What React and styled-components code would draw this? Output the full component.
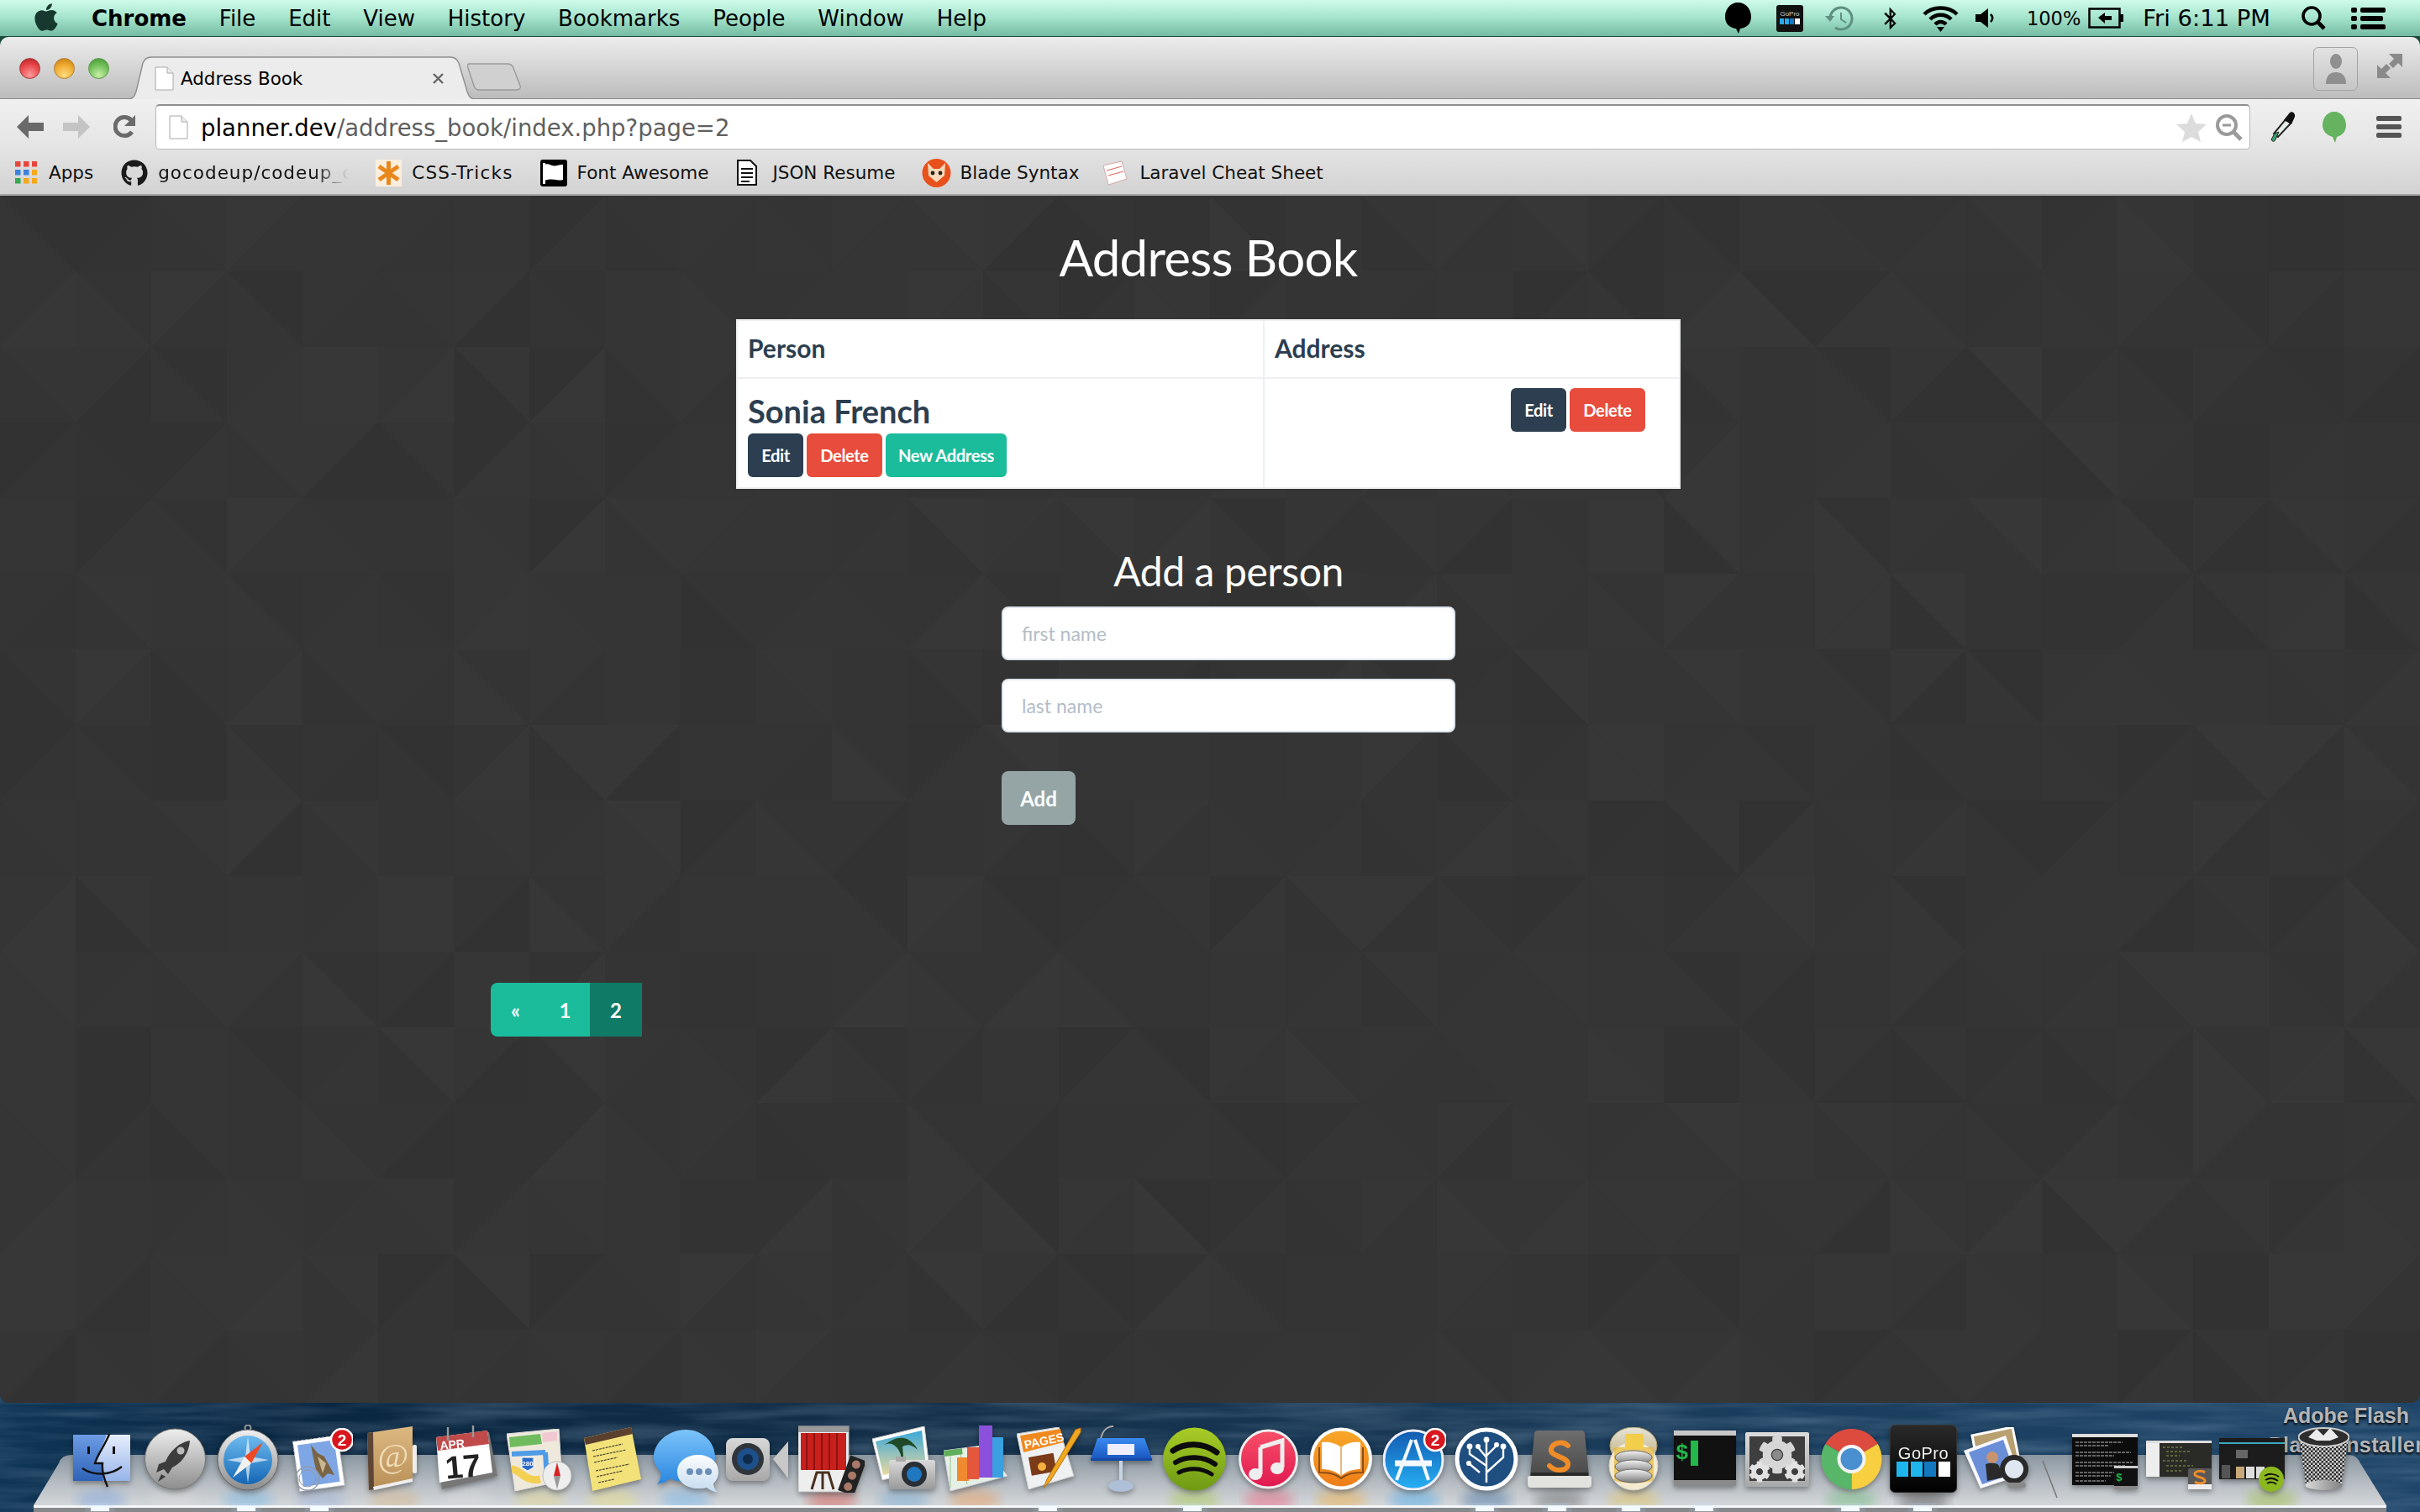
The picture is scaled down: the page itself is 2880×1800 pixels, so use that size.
import React, { useMemo } from 'react';
import styled, { createGlobalStyle } from 'styled-components';
import { FaApple, FaGithub, FaCog, FaBluetoothB } from 'react-icons/fa';

const GlobalStyle = createGlobalStyle`
  html, body { margin: 0; padding: 0; background: #123; }
  body { width: 2880px; height: 1800px; overflow: hidden; font-family: "Lato", sans-serif; }
  * { box-sizing: border-box; }
`;

const Desktop = styled.div`
  width: 2880px;
  height: 1800px;
  display: flex;
  flex-direction: column;
  background: #1c4a3c;
  overflow: hidden;
`;

/* ---------- menu bar ---------- */
const MenuBar = styled.div`
  height: 44px;
  flex: none;
  display: flex;
  align-items: center;
  padding: 0 41px 0 38px;
  background: linear-gradient(180deg, #cffbea 0%, #a8e6cf 45%, #74bba2 100%);
  border-bottom: 1px solid #1f4a3c;
  font-family: "DejaVu Sans", sans-serif;
  font-size: 26px;
  color: #000;
`;

const AppleMark = styled(FaApple)`
  width: 34px;
  height: 37px;
  margin: -3px 37px 0 0;
  color: #17382f;
`;

const MenuList = styled.div`
  display: flex;
  gap: 38.8px;
`;

const MenuItem = styled.span`
  font-weight: ${p => (p.$bold ? 700 : 400)};
  line-height: 40px;
`;

const StatusArea = styled.div`
  margin-left: auto;
  display: flex;
  align-items: center;
`;

const StatusItem = styled.span`
  margin-left: ${p => p.$gap}px;
  display: flex;
  line-height: 40px;
  font-size: ${p => p.$size || 26}px;
  color: ${p => p.$color || '#000'};
`;

/* ---------- browser window ---------- */
const Window = styled.div`
  height: 1626px;
  flex: none;
  display: flex;
  flex-direction: column;
  position: relative;
  z-index: 2;
  border-radius: 10px;
  overflow: hidden;
`;

const TabStrip = styled.div`
  height: 74px;
  flex: none;
  display: flex;
  align-items: flex-end;
  padding-right: 21px;
  background: linear-gradient(180deg, #ececec 0%, #dcdcdc 35%, #bcbcbc 100%);
  border-bottom: 1px solid #8c8c8c;
`;

const Lights = styled.div`
  display: flex;
  gap: 16px;
  margin: 0 22px 23px 23px;
`;

const Light = styled.span`
  width: 25px;
  height: 25px;
  border-radius: 50%;
  border: 1px solid ${p => p.$edge};
  background: radial-gradient(circle at 50% 85%, ${p => p.$glow} 0%, ${p => p.$color} 55%, ${p => p.$dark} 100%);
`;

const Tab = styled.div`
  position: relative;
  width: 414px;
  height: 51px;
  margin-bottom: -1px;
  display: flex;
  align-items: center;
  padding: 1px 0 0 32px;
  font-family: "DejaVu Sans", sans-serif;
  font-size: 21.4px;
  color: #000;
`;

const TabShape = styled.svg`
  position: absolute;
  inset: 0;
  width: 100%;
  height: 100%;
`;

const TabContent = styled.span`
  position: relative;
  display: flex;
  align-items: center;
`;

const TabTitle = styled.span`
  margin-left: 8px;
`;

const TabClose = styled.svg`
  position: absolute;
  left: 363px;
  top: 20px;
  width: 13px;
  height: 13px;
`;

const NewTab = styled.svg`
  width: 64px;
  height: 33px;
  margin: 0 0 9px -10px;
  position: relative;
`;

const ProfileButton = styled.div`
  width: 53px;
  height: 52px;
  margin: 0 23px 9px auto;
  border: 1px solid #a4a4a4;
  border-radius: 6px;
  background: linear-gradient(180deg, #e2e2e2, #c6c6c6);
  display: flex;
  align-items: center;
  justify-content: center;
`;

const FullscreenIcon = styled.svg`
  width: 30px;
  height: 29px;
  margin-bottom: 24px;
`;

const Toolbar = styled.div`
  flex: none;
  height: 115px;
  background: linear-gradient(180deg, #f0f0f0 0%, #e6e6e6 45%, #d2d2d2 100%);
  border-bottom: 2px solid #a6a6a6;
`;

const NavRow = styled.div`
  height: 62px;
  display: flex;
  align-items: center;
  padding: 4px 22px 0 20px;
`;

const NavIcon = styled.svg`
  flex: none;
  margin-left: ${p => p.$gap || 0}px;
  width: ${p => p.$w}px;
  height: ${p => p.$h}px;
`;

const Omnibox = styled.div`
  flex: 1;
  height: 54px;
  margin: 0 0 0 24px;
  display: flex;
  align-items: center;
  padding: 0 8px 0 15px;
  background: #fff;
  border: 1px solid #b8b8b8;
  border-top: 2px solid #8e8e8e;
  border-radius: 5px;
  font-family: "DejaVu Sans", sans-serif;
  font-size: 27.5px;
`;

const UrlHost = styled.span`
  margin-left: 15px;
  color: #000;
`;

const UrlPath = styled.span`
  color: #5f5f5f;
`;

const OmniActions = styled.div`
  margin-left: auto;
  display: flex;
  align-items: center;
  gap: 11px;
`;

const BookmarkBar = styled.div`
  height: 51px;
  display: flex;
  align-items: center;
  padding-left: 18px;
  font-family: "DejaVu Sans", sans-serif;
  font-size: 21.5px;
  color: #111;
`;

const Bookmark = styled.div`
  display: flex;
  align-items: center;
  gap: ${p => p.$inner || 12}px;
  margin-left: ${p => p.$gap || 0}px;
`;

const BookmarkLabel = styled.span`
  white-space: nowrap;
  letter-spacing: ${p => p.$track || 0}px;
`;

const FadedLabel = styled(BookmarkLabel)`
  width: 227px;
  mask-image: linear-gradient(90deg, #000 82%, transparent 100%);
`;

/* ---------- page ---------- */
const Page = styled.main`
  flex: 1;
  position: relative;
  background: #343434;
  overflow: hidden;
`;

const PatternLayer = styled.svg`
  position: absolute;
  inset: 0;
  width: 100%;
  height: 100%;
`;

const Content = styled.div`
  position: relative;
  display: flex;
  flex-direction: column;
  align-items: flex-start;
  padding-top: 30px;
`;

const Title = styled.h1`
  width: 100%;
  margin: 0 0 31px;
  padding-right: 4px;
  text-align: center;
  font-size: 60px;
  line-height: 86px;
  font-weight: 400;
  letter-spacing: -0.7px;
  color: #fff;
`;

const Table = styled.table`
  width: 1124px;
  margin-left: 876px;
  border-collapse: collapse;
  table-layout: fixed;
  background: #fff;
  color: #2c3e50;
`;

const HeadCell = styled.th`
  height: 69px;
  padding: 0 12px 3px;
  border: 2px solid #ecf0f1;
  text-align: left;
  font-size: 30px;
  font-weight: 700;
`;

const BodyCell = styled.td`
  height: 131px;
  padding: 11px 12px 10px;
  border: 2px solid #ecf0f1;
  vertical-align: top;
`;

const PersonName = styled.h3`
  margin: 0;
  font-size: 38px;
  line-height: 54px;
  font-weight: 700;
`;

const ButtonRow = styled.div`
  display: flex;
  gap: 4px;
  justify-content: ${p => (p.$end ? 'flex-end' : 'flex-start')};
  padding-right: ${p => (p.$end ? 28 : 0)}px;
`;

const Button = styled.button`
  width: ${p => p.$w}px;
  height: 52px;
  padding: 0;
  border: none;
  border-radius: 6px;
  background: ${p => p.$color};
  color: #fff;
  font-family: "Lato", sans-serif;
  font-size: 20.2px;
  font-weight: 700;
  letter-spacing: -0.4px;
`;

const Form = styled.form`
  width: 540px;
  margin: 63px 0 0 1192px;
  display: flex;
  flex-direction: column;
`;

const FormTitle = styled.h2`
  margin: 0 0 7px;
  text-align: center;
  font-size: 48px;
  line-height: 70px;
  font-weight: 400;
  letter-spacing: -0.4px;
  color: #fff;
`;

const Input = styled.input`
  width: 540px;
  height: 64px;
  margin-bottom: 22px;
  padding: 0 22px;
  border: 2px solid #dde5ed;
  border-radius: 8px;
  background: #fff;
  font-family: "Lato", sans-serif;
  font-size: 23px;
  &::placeholder { color: #b3bdc7; opacity: 1; }
`;

const AddButton = styled.button`
  width: 88px;
  height: 64px;
  margin-top: 24px;
  border: none;
  border-radius: 8px;
  background: #95a5a6;
  color: #fff;
  font-family: "Lato", sans-serif;
  font-size: 24px;
  font-weight: 700;
`;

const Pagination = styled.nav`
  display: flex;
  margin: 188px 0 0 584px;
  height: 64px;
  border-radius: 8px 0 0 8px;
  overflow: hidden;
  font-size: 24px;
  font-weight: 700;
  color: #fff;
`;

const PageLink = styled.a`
  width: ${p => p.$w}px;
  display: flex;
  align-items: center;
  justify-content: center;
  background: ${p => (p.$active ? '#0f7a65' : '#1abc9c')};
`;

/* ---------- dock ---------- */
const Dock = styled.footer`
  height: 142px;
  flex: none;
  margin-top: -12px;
  position: relative;
  background: linear-gradient(90deg, #0f3556 0%, #0a2742 12%, #14304a 40%, #1b3d5c 70%, #1d4468 100%);
`;

const DockBackdrop = styled.svg`
  position: absolute;
  inset: 0;
  width: 100%;
  height: 100%;
`;

const DesktopLabel = styled.div`
  position: absolute;
  top: ${p => p.$top}px;
  left: ${p => p.$left}px;
  font-family: "Liberation Sans", sans-serif;
  font-weight: 700;
  font-size: 25px;
  letter-spacing: ${p => p.$track || 0}px;
  white-space: nowrap;
  color: #b5b5b5;
  text-shadow: 0 2px 3px #000;
`;

const DockRow = styled.div`
  position: relative;
  display: flex;
  align-items: flex-start;
  padding-top: 12px;
`;

const DockItem = styled.div`
  flex: none;
  display: flex;
  margin-left: ${p => p.$gap}px;
  margin-top: ${p => p.$top}px;
  width: ${p => p.$w}px;
  height: ${p => p.$h}px;
  filter: drop-shadow(0 3px 3px rgba(0, 0, 0, 0.35));
`;

const Grad = ({ id, a, b, h }) => (
  <linearGradient id={id} x1="0" y1="0" x2={h ? 1 : 0} y2={h ? 0 : 1}>
    <stop offset="0" stopColor={a} />
    <stop offset="1" stopColor={b} />
  </linearGradient>
);

const Svg = ({ w, h, children }) => (
  <svg width={w} height={h} viewBox={`0 0 ${w} ${h}`}>{children}</svg>
);

const Badge = ({ cx, cy, n }) => (
  <g>
    <circle cx={cx} cy={cy} r="13" fill="#d8161e" stroke="#fff" strokeWidth="2.5" />
    <text x={cx} y={cy + 7} textAnchor="middle" fontFamily="Liberation Sans" fontWeight="700" fontSize="19" fill="#fff">{n}</text>
  </g>
);

const Finder = () => (
  <Svg w={68} h={64}>
    <defs>
      <Grad id="fa" a="#6d9ce4" b="#2f63b8" />
      <Grad id="fb" a="#e6eefb" b="#96b4ea" />
    </defs>
    <rect x="0" y="1" width="68" height="55" fill="url(#fa)" />
    <path d="M40 1H68V56H36C35 48 36 42 34 36H26C29 22 36 14 40 1Z" fill="url(#fb)" />
    <path d="M44 -2C38 14 30 22 26 35H35C34 44 37 54 41 63" fill="none" stroke="#111" strokeWidth="2.4" />
    <path d="M11 41C24 50 44 50 58 39" fill="none" stroke="#111" strokeWidth="2.4" />
    <rect x="17" y="15" width="3" height="9" fill="#111" />
    <rect x="47" y="15" width="3" height="9" fill="#111" />
  </Svg>
);

const Launchpad = () => (
  <Svg w={73} h={74}>
    <defs><Grad id="la" a="#eeeeee" b="#8d8d8d" /></defs>
    <circle cx="36.5" cy="37" r="36" fill="url(#la)" stroke="#777" />
    <path d="M54 15C42 17 30 27 25 40L17 43L14 53L23 49L28 55L33 47C44 42 53 30 54 15Z" fill="#3c3c3c" />
    <path d="M20 55L16 64L25 58Z" fill="#3c3c3c" />
    <circle cx="43" cy="27" r="4.5" fill="#bbb" />
  </Svg>
);

const Safari = () => (
  <Svg w={74} h={79}>
    <defs>
      <Grad id="sa" a="#f0f0f0" b="#8b8b8b" />
      <Grad id="sb" a="#6dbbf0" b="#1466b4" />
    </defs>
    <circle cx="37" cy="4" r="3.5" fill="none" stroke="#999" strokeWidth="2" />
    <circle cx="37" cy="42" r="36" fill="url(#sa)" stroke="#666" />
    <circle cx="37" cy="42" r="29" fill="url(#sb)" />
    <path d="M37 14L40 38L62 42L40 46L37 70L34 46L12 42L34 38Z" fill="#fff" opacity="0.65" />
    <path d="M55 21L41 46L33 38Z" fill="#ef4a24" />
    <path d="M19 63L33 38L41 46Z" fill="#f2f2f2" />
  </Svg>
);

const Mail = () => (
  <Svg w={74} h={76}>
    <g transform="rotate(-8 34 40)">
      <rect x="6" y="12" width="54" height="60" fill="#fff" stroke="#bbb" strokeDasharray="3 2" />
      <rect x="11" y="17" width="44" height="50" fill="#7fa6e4" />
    </g>
    <path d="M24 20L32 30L40 34L52 56L44 54L38 60L30 50L27 36Z" fill="#7a6444" />
    <path d="M32 34L42 42L38 54Z" fill="#c8b690" />
    <circle cx="20" cy="60" r="14" fill="none" stroke="#8f9aa8" strokeWidth="1.4" />
    <circle cx="20" cy="60" r="10" fill="none" stroke="#8f9aa8" strokeWidth="1" />
    <Badge cx={61} cy={14} n="2" />
  </Svg>
);

const Contacts = () => (
  <Svg w={68} h={76}>
    <defs><Grad id="ca" a="#dcb880" b="#b88e57" /></defs>
    <path d="M2 8L56 0V64L4 76Z" fill="url(#ca)" />
    <path d="M2 8L9 7L10 75L4 76Z" fill="#5d4636" />
    <path d="M9 72L56 62V66L10 76Z" fill="#eee" />
    <rect x="56" y="22" width="5" height="34" rx="2" fill="#eee" />
    <text x="33" y="48" textAnchor="middle" fontFamily="Liberation Serif" fontSize="40" fill="#efdcb5">@</text>
  </Svg>
);

const Calendar = () => (
  <Svg w={74} h={76}>
    <path d="M1 14L64 8L74 60L8 76Z" fill="#777" />
    <path d="M1 14L62 6L68 56L5 68Z" fill="#fff" />
    <path d="M1 14L62 6L64 22L3 30Z" fill="#c04a4a" />
    <path d="M15 2V18M45 0V14" stroke="#999" strokeWidth="2.4" />
    <text x="6" y="29" fontFamily="Liberation Sans" fontWeight="700" fontSize="14" fill="#fff" transform="rotate(-6 6 29)">APR</text>
    <text x="34" y="62" textAnchor="middle" fontFamily="Liberation Sans" fontWeight="700" fontSize="38" fill="#222" transform="rotate(-5 34 62)">17</text>
  </Svg>
);

const Maps = () => (
  <Svg w={78} h={74}>
    <path d="M0 6L62 0L66 62L10 74Z" fill="#efe9dc" stroke="#ddd" />
    <path d="M3 10L40 6L42 18L4 22Z" fill="#6fbb5e" />
    <path d="M42 5L60 3V14L43 16Z" fill="#f1c8d2" />
    <path d="M6 30L46 28M46 28L48 60" stroke="#4e9be6" strokeWidth="6" fill="none" />
    <path d="M6 48C16 48 22 64 40 60" stroke="#f3cf52" strokeWidth="9" fill="none" />
    <path d="M18 34H32V46L25 50L18 46Z" fill="#2a6bc8" stroke="#fff" />
    <text x="25" y="44" textAnchor="middle" fontFamily="Liberation Sans" fontWeight="700" fontSize="8" fill="#fff">280</text>
    <circle cx="60" cy="56" r="17" fill="#eee" stroke="#bbb" />
    <path d="M60 40L64 56H56Z" fill="#d92020" />
    <path d="M60 72L64 56H56Z" fill="#999" />
  </Svg>
);

const Notes = () => (
  <Svg w={68} h={76}>
    <path d="M0 13L56 0L68 62L10 76Z" fill="#f3e27a" />
    <path d="M0 13L56 0L58 8L2 21Z" fill="#5b4030" />
    <path d="M10 28L46 20M11 35L50 27M12 42L40 36M14 52L54 44M15 59L46 52M17 66L36 62" stroke="#4a4632" strokeWidth="1.2" strokeDasharray="3 1" />
  </Svg>
);

const Messages = () => (
  <Svg w={78} h={74}>
    <defs>
      <Grad id="ma" a="#7cc4fa" b="#2a86e0" />
      <Grad id="mb" a="#fdfdfd" b="#c4dcf0" />
    </defs>
    <path d="M39 0C60 0 74 16 74 32C74 50 60 62 39 62C32 62 26 61 21 58C16 62 11 64 5 65C9 60 10 56 9 50C3 44 1 38 1 32C1 16 18 0 39 0Z" fill="url(#ma)" />
    <path d="M54 30C67 30 78 38 78 50C78 58 74 62 72 64C72 68 74 72 77 74C72 74 68 72 64 69C60 70 58 70 54 70C40 70 29 62 29 50C29 38 40 30 54 30Z" fill="url(#mb)" />
    <circle cx="44" cy="50" r="4" fill="#6b8fb8" />
    <circle cx="55" cy="50" r="4" fill="#6b8fb8" />
    <circle cx="66" cy="50" r="4" fill="#6b8fb8" />
  </Svg>
);

const FaceTime = () => (
  <Svg w={75} h={52}>
    <defs><Grad id="fta" a="#d8d8d8" b="#a8a8a8" /></defs>
    <rect x="0" y="0" width="52" height="51" rx="8" fill="url(#fta)" />
    <circle cx="26" cy="25" r="19" fill="#30353c" />
    <circle cx="26" cy="25" r="13" fill="#1d4f8a" />
    <circle cx="26" cy="25" r="6" fill="#0f2a4a" />
    <path d="M56 25L74 4V48Z" fill="#c8c8c8" />
  </Svg>
);

const PhotoBooth = () => (
  <Svg w={79} h={80}>
    <rect x="0" y="1" width="60" height="78" fill="#eee" stroke="#bbb" />
    <rect x="0" y="1" width="60" height="7" fill="#999" />
    <rect x="3" y="9" width="54" height="44" fill="#c8201c" />
    <path d="M10 9V53M19 9V53M28 9V53M37 9V53M46 9V53" stroke="#8e1210" strokeWidth="2" />
    <path d="M16 76L22 56H36L42 76M29 56V76" stroke="#4a3020" strokeWidth="3" fill="none" />
    <g transform="rotate(20 65 60)">
      <rect x="54" y="38" width="20" height="44" fill="#222" />
      <circle cx="64" cy="46" r="5" fill="#a87868" />
      <circle cx="64" cy="60" r="5" fill="#a87868" />
      <circle cx="64" cy="74" r="5" fill="#a87868" />
    </g>
  </Svg>
);

const IPhoto = () => (
  <Svg w={75} h={75}>
    <defs>
      <Grad id="ipa" a="#3aa8d8" b="#e8d8a0" />
      <Grad id="ipb" a="#dadada" b="#9a9a9a" />
    </defs>
    <path d="M0 15L62 0L68 50L12 64Z" fill="#fff" stroke="#ccc" />
    <path d="M4 18L59 5L64 46L13 58Z" fill="url(#ipa)" />
    <path d="M34 34C30 22 22 18 14 22C22 18 30 10 44 16C38 14 50 18 54 28C46 20 40 22 36 24L38 46H34Z" fill="#1f4a28" />
    <rect x="20" y="40" width="55" height="35" rx="3" fill="url(#ipb)" />
    <circle cx="50" cy="57" r="15" fill="#2a2f36" />
    <circle cx="50" cy="57" r="9" fill="#1f78c0" />
    <rect x="28" y="36" width="12" height="6" fill="#aaa" />
  </Svg>
);

const Numbers = () => (
  <Svg w={76} h={78}>
    <path d="M0 30L46 24L76 60L8 78Z" fill="#e6f0e4" stroke="#ccd" />
    <rect x="0" y="30" width="22" height="7" fill="#5fb05a" transform="rotate(-7 0 30)" />
    <path d="M8 36V74M46 30L60 62M20 34L28 70" stroke="#9cc79a" />
    <rect x="16" y="38" width="14" height="28" fill="#f08a30" />
    <rect x="28" y="26" width="14" height="38" fill="#e4573c" />
    <rect x="42" y="0" width="16" height="62" fill="#8b50dc" />
    <rect x="58" y="14" width="13" height="48" fill="#3aa0e0" />
  </Svg>
);

const Pages = () => (
  <Svg w={78} h={74}>
    <path d="M0 8L50 0L68 58L14 74Z" fill="#eef0f2" stroke="#ccc" />
    <path d="M4 10L52 2L56 18L8 30Z" fill="#f08a20" />
    <text x="10" y="26" fontFamily="Liberation Sans" fontWeight="700" fontSize="14" fill="#fff" transform="rotate(-12 10 26)">PAGES</text>
    <rect x="14" y="36" width="30" height="22" fill="#7b3a18" transform="rotate(-10 14 36)" />
    <circle cx="30" cy="47" r="5" fill="#f3b040" />
    <path d="M76 1L70 3L36 62L32 72L40 64L76 6Z" fill="#f0a820" stroke="#b87010" />
  </Svg>
);

const Keynote = () => (
  <Svg w={73} h={80}>
    <defs><Grad id="ka" a="#3a8af0" b="#1a56c0" /></defs>
    <path d="M12 16C14 6 20 1 27 1" stroke="#aaa" fill="none" strokeWidth="2" />
    <circle cx="12" cy="18" r="3" fill="#ddd" />
    <path d="M8 15H64L73 40H0Z" fill="url(#ka)" />
    <rect x="20" y="22" width="32" height="13" fill="#eef" />
    <rect x="0" y="39" width="73" height="3" fill="#144aa8" />
    <rect x="34" y="42" width="4" height="28" fill="#c8d4e4" />
    <ellipse cx="36" cy="72" rx="15" ry="7" fill="#aebfd8" />
  </Svg>
);

const Spotify = () => (
  <Svg w={75} h={76}>
    <defs><Grad id="spa" a="#a8cc26" b="#6e9a14" /></defs>
    <circle cx="37.5" cy="38" r="37.5" fill="url(#spa)" />
    <path d="M12 28C26 18 48 18 64 30" stroke="#0c0c0c" strokeWidth="7" fill="none" strokeLinecap="round" />
    <path d="M15 42C28 34 48 34 62 44" stroke="#0c0c0c" strokeWidth="6" fill="none" strokeLinecap="round" />
    <path d="M19 54C30 48 46 48 58 56" stroke="#0c0c0c" strokeWidth="5" fill="none" strokeLinecap="round" />
  </Svg>
);

const ITunes = () => (
  <Svg w={71} h={72}>
    <defs><Grad id="ita" a="#f85068" b="#e01850" /></defs>
    <circle cx="35.5" cy="36" r="34" fill="url(#ita)" stroke="#eee" strokeWidth="3" />
    <path d="M26 22L52 14V46" stroke="#eee" strokeWidth="5" fill="none" />
    <path d="M26 22V54" stroke="#eee" strokeWidth="5" fill="none" />
    <ellipse cx="20" cy="54" rx="8" ry="7" fill="#eee" />
    <ellipse cx="46" cy="47" rx="8" ry="7" fill="#eee" />
  </Svg>
);

const IBooks = () => (
  <Svg w={74} h={75}>
    <defs><Grad id="iba" a="#f8a828" b="#ee7c18" /></defs>
    <circle cx="37" cy="37.5" r="35" fill="url(#iba)" stroke="#fff" strokeWidth="4" />
    <path d="M37 24C30 18 20 17 14 18V50C22 50 30 52 37 58C44 52 52 50 60 50V18C54 17 44 18 37 24Z" fill="#fff" />
    <path d="M37 24V58" stroke="#e8a050" strokeWidth="1.5" />
    <path d="M11 24V54C22 54 30 55 37 61C44 55 52 54 63 54V24" fill="none" stroke="#8c4e18" strokeWidth="2" />
  </Svg>
);

const AppStore = () => (
  <Svg w={75} h={74}>
    <defs><Grad id="asa" a="#125ab0" b="#26b0f4" /></defs>
    <circle cx="36" cy="38" r="35" fill="url(#asa)" stroke="#eef" strokeWidth="3" />
    <path d="M38 14L54 62M34 14L16 62" stroke="#f4f8ff" strokeWidth="4" />
    <path d="M14 42H58" stroke="#f4f8ff" strokeWidth="7" />
    <Badge cx={62} cy={14} n="2" />
  </Svg>
);

const SourceTree = () => (
  <Svg w={76} h={76}>
    <circle cx="38" cy="38" r="35" fill="#1f4f80" stroke="#fff" strokeWidth="5" />
    <path d="M38 66V16M38 46L18 32V24M38 54L58 36V24M38 34L50 22M38 36L28 24M30 54L18 44" stroke="#fff" strokeWidth="2.4" fill="none" />
    <circle cx="38" cy="15" r="3.4" fill="#fff" />
    <circle cx="18" cy="23" r="3.4" fill="#fff" />
    <circle cx="58" cy="23" r="3.4" fill="#fff" />
    <circle cx="50" cy="21" r="3" fill="#fff" />
    <circle cx="28" cy="23" r="3" fill="#fff" />
    <circle cx="17" cy="43" r="3" fill="#fff" />
  </Svg>
);

const Sublime = () => (
  <Svg w={76} h={68}>
    <defs><Grad id="sua" a="#6e6e6e" b="#4a4a4a" /></defs>
    <path d="M8 4C8 1 10 0 13 0H63C66 0 68 1 68 4L73 54H3Z" fill="url(#sua)" />
    <rect x="4" y="50" width="68" height="8" fill="#2a2a2a" />
    <path d="M0 56C0 54 2 54 3 54H73C74 54 76 54 76 56V64C76 67 74 68 72 68H4C2 68 0 67 0 64Z" fill="#e2e2de" />
    <path d="M48 18C42 12 30 14 28 22C26 32 48 30 48 40C48 48 34 50 26 42" stroke="#f08c28" strokeWidth="6" fill="none" strokeLinecap="round" />
  </Svg>
);

const Sequel = () => (
  <Svg w={75} h={76}>
    <defs>
      <Grad id="sqa" a="#e8e4d8" b="#b8a878" />
      <Grad id="sqb" a="#f4f4f4" b="#7a7a7a" />
    </defs>
    <ellipse cx="37" cy="22" rx="28" ry="22" fill="url(#sqa)" stroke="#a89868" />
    <circle cx="37" cy="46" r="29" fill="#f3ead0" stroke="#ccc" />
    <path d="M14 24H61V62C61 68 14 68 14 62Z" fill="#e8b838" opacity="0.7" />
    <rect x="27" y="8" width="22" height="18" rx="2" fill="#f2ce4a" />
    <ellipse cx="37" cy="36" rx="22" ry="8" fill="url(#sqb)" stroke="#666" />
    <ellipse cx="37" cy="47" rx="22" ry="8" fill="url(#sqb)" stroke="#666" />
    <ellipse cx="37" cy="58" rx="22" ry="8" fill="url(#sqb)" stroke="#666" />
  </Svg>
);

const Terminal = () => (
  <Svg w={74} h={66}>
    <rect x="0" y="0" width="74" height="66" rx="2" fill="#111" />
    <rect x="0" y="0" width="74" height="6" fill="#c8c8c8" />
    <rect x="0" y="59" width="74" height="7" fill="#8a8a8a" />
    <text x="2" y="34" fontFamily="Liberation Mono" fontWeight="700" fontSize="26" fill="#22b84a">$</text>
    <rect x="20" y="12" width="9" height="30" fill="#22b84a" />
  </Svg>
);

const SysPrefs = () => (
  <Svg w={76} h={65}>
    <defs><Grad id="pra" a="#dcdcdc" b="#a8a8a8" /></defs>
    <rect x="0" y="0" width="76" height="65" rx="2" fill="url(#pra)" />
    <rect x="5" y="5" width="66" height="53" fill="#3e3e3e" />
    <FaCog x="15" y="4" size={46} color="#d6d6d6" />
    <FaCog x="4" y="34" size={26} color="#e2e2e2" />
    <FaCog x="46" y="34" size={26} color="#e2e2e2" />
    <circle cx="38" cy="27" r="6" fill="#8a8a8a" />
  </Svg>
);

const Chrome = () => (
  <Svg w={73} h={72}>
    <path d="M36.5 36L5.3 18A36 36 0 0 1 67.7 18Z" fill="#dd4b3e" />
    <path d="M36.5 36L67.7 18A36 36 0 0 1 36.5 72Z" fill="#f8cf3e" />
    <path d="M36.5 36L36.5 72A36 36 0 0 1 5.3 18Z" fill="#58b668" />
    <circle cx="36.5" cy="36" r="17" fill="#f4f4f4" />
    <circle cx="36.5" cy="36" r="13" fill="#4a90d0" />
  </Svg>
);

const GoPro = () => (
  <Svg w={80} h={81}>
    <defs><Grad id="goa" a="#2a2a2a" b="#000" /></defs>
    <rect x="0" y="0" width="80" height="81" rx="7" fill="url(#goa)" stroke="#444" />
    <text x="40" y="41" textAnchor="middle" fontFamily="Liberation Sans" fontSize="20" fill="#eee" letterSpacing="0.5">GoPro</text>
    <rect x="8" y="44" width="14" height="18" fill="#1fb6f0" />
    <rect x="25" y="44" width="14" height="18" fill="#1fb6f0" />
    <rect x="41" y="44" width="14" height="18" fill="#1378c0" />
    <rect x="58" y="44" width="14" height="18" fill="#fff" />
  </Svg>
);

const Preview = () => (
  <Svg w={77} h={73}>
    <path d="M10 10L58 0L66 40L18 52Z" fill="#b8a070" stroke="#fff" strokeWidth="3" />
    <path d="M0 28L50 10L66 58L20 73Z" fill="#f8f8ff" />
    <path d="M6 30L47 15L61 55L22 68Z" fill="#6a8fd8" />
    <circle cx="34" cy="36" r="7" fill="#c89470" />
    <path d="M26 44C32 42 40 42 42 46L46 60L28 64Z" fill="#2a2a2a" />
    <circle cx="60" cy="50" r="17" fill="#2a2a2a" />
    <circle cx="60" cy="50" r="11" fill="#dfe8f0" />
    <rect x="52" y="66" width="22" height="6" rx="3" fill="#888" />
  </Svg>
);

const ThumbTerminal = () => (
  <Svg w={78} h={66}>
    <rect x="0" y="0" width="78" height="61" fill="#0c0c0c" />
    <rect x="0" y="0" width="78" height="4" fill="#ddd" />
    <path d="M4 10H60M4 14H44M4 22H70M4 26H50M4 34H72M4 38H64M4 46H50M4 50H46M4 56H40" stroke="#b8b8b8" strokeWidth="1" strokeDasharray="4 1" />
    <rect x="50" y="38" width="28" height="28" fill="#111" />
    <rect x="50" y="38" width="28" height="3" fill="#ccc" />
    <rect x="50" y="62" width="28" height="4" fill="#888" />
    <text x="52" y="56" fontFamily="Liberation Mono" fontWeight="700" fontSize="13" fill="#22b84a">$</text>
  </Svg>
);

const ThumbSublime = () => (
  <Svg w={78} h={58}>
    <rect x="0" y="0" width="78" height="43" fill="#2a2b26" />
    <rect x="0" y="0" width="16" height="43" fill="#eee" />
    <rect x="0" y="0" width="78" height="3" fill="#ddd" />
    <path d="M20 8H44M24 13H52M24 18H40M20 24H48M24 30H56M24 36H44" stroke="#8aa050" strokeWidth="1" strokeDasharray="3 2" />
    <path d="M50 35C50 33 52 33 52 33H76C78 33 78 35 78 35V58H50Z" fill="#595959" />
    <rect x="50" y="52" width="28" height="6" fill="#eee" />
    <path d="M70 38C66 35 58 36 58 40C58 44 70 43 70 48C70 51 62 52 58 49" stroke="#f08c28" strokeWidth="3" fill="none" />
  </Svg>
);

const ThumbSpotify = () => (
  <Svg w={78} h={64}>
    <rect x="0" y="0" width="78" height="49" fill="#1c1c1c" />
    <rect x="0" y="5" width="78" height="2" fill="#3aa8c0" />
    <rect x="3" y="32" width="10" height="16" fill="#555" />
    <rect x="20" y="34" width="10" height="14" fill="#c8a878" />
    <rect x="32" y="34" width="10" height="14" fill="#ddd" />
    <rect x="44" y="34" width="10" height="14" fill="#ddd" />
    <rect x="20" y="14" width="14" height="10" fill="#666" />
    <circle cx="62" cy="49" r="15" fill="#8cb81f" />
    <path d="M54 45C59 42 66 42 71 46M55 50C60 47 65 47 70 51M57 54C60 52 65 52 68 55" stroke="#111" strokeWidth="2" fill="none" />
  </Svg>
);

const Trash = () => (
  <Svg w={61} h={76}>
    <defs>
      <pattern id="mesh" width="5" height="5" patternUnits="userSpaceOnUse">
        <rect width="5" height="5" fill="#2a2a2a" />
        <rect width="2.5" height="2.5" fill="#cfcfcf" />
        <rect x="2.5" y="2.5" width="2.5" height="2.5" fill="#cfcfcf" />
      </pattern>
      <Grad id="tra" a="#dadada" b="#808080" h />
    </defs>
    <path d="M1 12L9 68C18 72 44 72 52 68L60 12Z" fill="url(#mesh)" />
    <ellipse cx="30.5" cy="12" rx="30" ry="11" fill="#2e2e2e" stroke="#ccc" strokeWidth="2" />
    <path d="M12 12L22 2L30 10L38 1L48 12L38 16H22Z" fill="#ececec" />
    <ellipse cx="30.5" cy="69" rx="22" ry="6" fill="url(#tra)" />
  </Svg>
);

/* x, y in screen pixels */
const dockIcons = [
  { x: 87, y: 1707, w: 68, h: 64, C: Finder },
  { x: 172, y: 1700, w: 73, h: 74, C: Launchpad },
  { x: 258, y: 1696, w: 74, h: 79, C: Safari },
  { x: 346, y: 1700, w: 74, h: 76, C: Mail },
  { x: 435, y: 1698, w: 68, h: 76, C: Contacts },
  { x: 518, y: 1697, w: 74, h: 76, C: Calendar },
  { x: 603, y: 1701, w: 78, h: 74, C: Maps },
  { x: 695, y: 1699, w: 68, h: 76, C: Notes },
  { x: 777, y: 1702, w: 78, h: 74, C: Messages },
  { x: 864, y: 1712, w: 75, h: 52, C: FaceTime },
  { x: 950, y: 1697, w: 79, h: 80, C: PhotoBooth },
  { x: 1038, y: 1698, w: 75, h: 75, C: IPhoto },
  { x: 1123, y: 1697, w: 76, h: 78, C: Numbers },
  { x: 1210, y: 1699, w: 78, h: 74, C: Pages },
  { x: 1298, y: 1697, w: 73, h: 80, C: Keynote },
  { x: 1384, y: 1699, w: 75, h: 76, C: Spotify },
  { x: 1474, y: 1701, w: 71, h: 72, C: ITunes },
  { x: 1559, y: 1699, w: 74, h: 75, C: IBooks },
  { x: 1646, y: 1700, w: 75, h: 74, C: AppStore },
  { x: 1731, y: 1699, w: 76, h: 76, C: SourceTree },
  { x: 1818, y: 1703, w: 76, h: 68, C: Sublime },
  { x: 1907, y: 1699, w: 75, h: 76, C: Sequel },
  { x: 1992, y: 1703, w: 74, h: 66, C: Terminal },
  { x: 2077, y: 1705, w: 76, h: 65, C: SysPrefs },
  { x: 2167, y: 1701, w: 73, h: 72, C: Chrome },
  { x: 2249, y: 1696, w: 80, h: 81, C: GoPro },
  { x: 2337, y: 1699, w: 77, h: 73, C: Preview },
  { x: 2466, y: 1707, w: 78, h: 66, C: ThumbTerminal },
  { x: 2554, y: 1715, w: 78, h: 58, C: ThumbSublime },
  { x: 2641, y: 1712, w: 78, h: 64, C: ThumbSpotify },
  { x: 2735, y: 1699, w: 61, h: 76, C: Trash },
];

const dockLights = [108, 282, 369, 1236, 1408, 1756, 1842, 1930, 2017, 2191, 2277];

const reflections = [
  [120, '#6f9be0'], [208, '#dddddd'], [295, '#60b0e8'], [382, '#8fa8d8'], [469, '#d8b078'], [555, '#dddddd'],
  [642, '#e8d880'], [729, '#f0e070'], [816, '#60b0f0'], [990, '#d84030'], [1075, '#60a0d0'], [1160, '#f09040'],
  [1421, '#a0c830'], [1510, '#f04868'], [1596, '#f8a828'], [1683, '#30a0f0'], [1769, '#2a6098'], [1856, '#555'],
  [1944, '#e8c040'], [2203, '#58b668'], [2289, '#333'], [2703, '#8cb81f'],
];

const Pattern = () => {
  // Flat shaded triangles on a 90px grid, diagonals alternate like the wallpaper tile
  const triangles = useMemo(() => {
    const shades = ['#323232', '#333333', '#343434', '#343434', '#353535', '#353535', '#363636', '#373737'];
    let seed = 20;
    const next = () => {
      seed = (seed * 16807) % 2147483647;
      return seed / 2147483647;
    };
    const out = [];
    for (let row = 0; row < 17; row++) {
      for (let col = 0; col < 32; col++) {
        const x = col * 90;
        const y = row * 90;
        const down = (col + row) % 2 === 0;
        const first = down
          ? `${x},${y} ${x + 90},${y} ${x + 90},${y + 90}`
          : `${x},${y} ${x + 90},${y} ${x},${y + 90}`;
        const second = down
          ? `${x},${y} ${x},${y + 90} ${x + 90},${y + 90}`
          : `${x + 90},${y} ${x + 90},${y + 90} ${x},${y + 90}`;
        out.push({ key: `${row}-${col}-a`, points: first, fill: shades[Math.floor(next() * 8)] });
        out.push({ key: `${row}-${col}-b`, points: second, fill: shades[Math.floor(next() * 8)] });
      }
    }
    return out;
  }, []);
  return (
    <PatternLayer aria-hidden="true">
      {triangles.map(t => <polygon key={t.key} points={t.points} fill={t.fill} />)}
    </PatternLayer>
  );
};

const DocIcon = ({ w = 23, h = 29 }) => (
  <svg width={w} height={h} viewBox="0 0 23 29">
    <path d="M1 1H15L22 8V28H1Z" fill="#fff" stroke="#a8a8a8" />
    <path d="M15 1V8H22" fill="#eee" stroke="#a8a8a8" />
  </svg>
);

const AppsIcon = () => (
  <svg width="26" height="27" viewBox="0 0 26 27">
    {[['#e8453c', '#e8453c', '#e8453c'], ['#3b82e0', '#3b82e0', '#f4a81d'], ['#34a853', '#f4a81d', '#f4a81d']].map((row, r) =>
      row.map((c, i) => <rect key={`${r}${i}`} x={i * 10} y={r * 10} width="6.5" height="6.5" fill={c} />)
    )}
  </svg>
);

export default function App() {
  return (
    <Desktop>
      <GlobalStyle />
      <MenuBar>
        <AppleMark />
        <MenuList>
          <MenuItem $bold>Chrome</MenuItem>
          {['File', 'Edit', 'View', 'History', 'Bookmarks', 'People', 'Window', 'Help'].map(m => (
            <MenuItem key={m}>{m}</MenuItem>
          ))}
        </MenuList>
        <StatusArea>
          <StatusItem>
            <svg width="31" height="37" viewBox="0 0 31 37"><path d="M15.5 0C25 0 31 8 31 17C31 25 26 30 18 31L16 37L13 31C5 30 0 25 0 17C0 8 6 0 15.5 0Z" fill="#000" /></svg>
          </StatusItem>
          <StatusItem $gap={30}>
            <svg width="32" height="32" viewBox="0 0 32 32">
              <rect width="32" height="32" rx="3" fill="#111" />
              <text x="16" y="13" textAnchor="middle" fontFamily="Liberation Sans" fontSize="8" fill="#ccc">GoPro</text>
              <rect x="4" y="16" width="5" height="7" fill="#2aa8e8" /><rect x="10" y="16" width="5" height="7" fill="#2aa8e8" />
              <rect x="16" y="16" width="5" height="7" fill="#1878c0" /><rect x="22" y="16" width="6" height="7" fill="#fff" />
            </svg>
          </StatusItem>
          <StatusItem $gap={26}>
            <svg width="34" height="30" viewBox="0 0 34 30" fill="none" stroke="#5f8f80" strokeWidth="3">
              <path d="M6 15A13 13 0 1 1 12 26" />
              <path d="M19 8V16L25 20" strokeWidth="2" />
              <path d="M0 12H11L6 19Z" fill="#5f8f80" stroke="none" />
            </svg>
          </StatusItem>
          <StatusItem $gap={35}>
            <FaBluetoothB size={28} style={{ width: 17 }} />
          </StatusItem>
          <StatusItem $gap={30}>
            <svg width="43" height="32" viewBox="0 0 43 32" fill="none" stroke="#000" strokeWidth="4.5">
              <path d="M2 11C12 1 31 1 41 11" />
              <path d="M9 17C16 10 27 10 34 17" />
              <path d="M15 23C19 19 24 19 28 23" />
              <path d="M17 26H26L21.5 32Z" fill="#000" stroke="none" />
            </svg>
          </StatusItem>
          <StatusItem $gap={20}>
            <svg width="23" height="23" viewBox="0 0 23 23">
              <path d="M0 7H6L15 0V23L6 16H0Z" fill="#000" />
              <path d="M18 7C21 10 21 13 18 16" stroke="#000" strokeWidth="2.5" fill="none" />
            </svg>
          </StatusItem>
          <StatusItem $gap={38} $size={22.5}>100%</StatusItem>
          <StatusItem $gap={9}>
            <svg width="42" height="25" viewBox="0 0 42 25">
              <rect x="1.5" y="1.5" width="36" height="22" fill="none" stroke="#000" strokeWidth="2.5" />
              <rect x="38" y="8" width="4" height="9" fill="#000" />
              <path d="M12 12L20 6V10H28V15H20V19Z" fill="#000" />
            </svg>
          </StatusItem>
          <StatusItem $gap={23} $size={27.4}>Fri 6:11 PM</StatusItem>
          <StatusItem $gap={37}>
            <svg width="29" height="29" viewBox="0 0 29 29" fill="none" stroke="#000" strokeWidth="3.6">
              <circle cx="12" cy="12" r="10" />
              <path d="M19 19L27 27" strokeWidth="4.6" />
            </svg>
          </StatusItem>
          <StatusItem $gap={30}>
            <svg width="41" height="26" viewBox="0 0 41 26" fill="#000">
              <rect x="0" y="0" width="7" height="6" rx="2" /><rect x="11" y="0" width="30" height="6" rx="2" />
              <rect x="0" y="10" width="7" height="6" rx="2" /><rect x="11" y="10" width="27" height="6" rx="2" />
              <rect x="0" y="20" width="7" height="6" rx="2" /><rect x="11" y="20" width="30" height="6" rx="2" />
            </svg>
          </StatusItem>
        </StatusArea>
      </MenuBar>

      <Window>
        <TabStrip>
          <Lights>
            <Light $color="#e8484c" $glow="#ff9a9a" $dark="#b01c20" $edge="#a83a3a" />
            <Light $color="#eeaa30" $glow="#ffdc80" $dark="#c07a10" $edge="#b08030" />
            <Light $color="#72c05a" $glow="#c8f0a8" $dark="#3f9030" $edge="#5a9a48" />
          </Lights>
          <Tab>
            <TabShape viewBox="0 0 414 51" preserveAspectRatio="none">
              <path d="M0 51C6 51 8 48 10 42L18 8C20 3 23 1 28 1H384C389 1 392 3 394 8L404 42C406 48 408 51 414 51" fill="#ececec" stroke="#8e8e8e" strokeWidth="1.4" />
            </TabShape>
            <TabContent>
              <DocIcon />
              <TabTitle>Address Book</TabTitle>
            </TabContent>
            <TabClose viewBox="0 0 13 13"><path d="M1 1L12 12M12 1L1 12" stroke="#666" strokeWidth="2.4" /></TabClose>
          </Tab>
          <NewTab viewBox="0 0 64 33">
            <path d="M3 1H48C52 1 54 3 55 6L63 27C64 30 62 32 59 32H14C10 32 9 30 8 27L1 6C0 3 0 1 3 1Z" fill="#d0d0d0" stroke="#9a9a9a" strokeWidth="1.4" />
          </NewTab>
          <ProfileButton>
            <svg width="26" height="36" viewBox="0 0 26 36" fill="#8f8f8f">
              <ellipse cx="13" cy="9" rx="7" ry="9" />
              <path d="M1 36C1 26 6 22 13 22C20 22 25 26 25 36Z" />
            </svg>
          </ProfileButton>
          <FullscreenIcon viewBox="0 0 30 29" fill="#8a8a8a">
            <path d="M14 0H30V16L25 11L19 17L14 12L20 6Z" />
            <path d="M0 29V13L5 18L11 12L16 17L10 23L16 29Z" />
          </FullscreenIcon>
        </TabStrip>

        <Toolbar>
          <NavRow>
            <NavIcon $w={32} $h={28} viewBox="0 0 32 28">
              <path d="M14 0L0 14L14 28V19H32V9H14Z" fill="#6a6a6a" />
            </NavIcon>
            <NavIcon $gap={23} $w={32} $h={28} viewBox="0 0 32 28">
              <path d="M18 0L32 14L18 28V19H0V9H18Z" fill="#c4c4c4" />
            </NavIcon>
            <NavIcon $gap={28} $w={26} $h={28} viewBox="0 0 26 28">
              <path d="M22 20A11 11 0 1 1 21 6" fill="none" stroke="#6a6a6a" strokeWidth="5" />
              <path d="M26 0V13H13Z" fill="#6a6a6a" />
            </NavIcon>
            <Omnibox>
              <DocIcon />
              <UrlHost>planner.dev</UrlHost>
              <UrlPath>/address_book/index.php?page=2</UrlPath>
              <OmniActions>
                <svg width="36" height="34" viewBox="0 0 36 34"><path d="M18 0L23 12L36 13L26 22L29 34L18 28L7 34L10 22L0 13L13 12Z" fill="#dcdcdc" /></svg>
                <svg width="32" height="32" viewBox="0 0 32 32" fill="none" stroke="#9a9a9a" strokeWidth="4">
                  <circle cx="13" cy="13" r="11" />
                  <path d="M21 21L30 30" strokeWidth="5" />
                  <path d="M8 13H18" strokeWidth="3" />
                </svg>
              </OmniActions>
            </Omnibox>
            <NavIcon $gap={24} $w={30} $h={36} viewBox="0 0 30 36">
              <path d="M19 8L24 14L9 30L4 26Z" fill="#e4efe8" stroke="#222" strokeWidth="2" />
              <path d="M10 24L5 26L1 33C2 36 5 36 6 33Z" fill="#3aa070" stroke="#222" />
              <path d="M16 10L23 1C26 -1 30 2 29 6L25 15Z" fill="#111" />
            </NavIcon>
            <NavIcon $gap={32} $w={28} $h={37} viewBox="0 0 28 37">
              <path d="M14 0C23 0 28 8 28 16C28 23 24 28 17 30L15 37L12 30C5 28 0 23 0 16C0 8 5 0 14 0Z" fill="#65b25f" />
            </NavIcon>
            <NavIcon $gap={36} $w={30} $h={26} viewBox="0 0 30 26" fill="#555">
              <rect width="30" height="6" rx="2" />
              <rect y="10" width="30" height="6" rx="2" />
              <rect y="20" width="30" height="6" rx="2" />
            </NavIcon>
          </NavRow>
          <BookmarkBar>
            <Bookmark $inner={14}><AppsIcon /><BookmarkLabel>Apps</BookmarkLabel></Bookmark>
            <Bookmark $gap={33}>
              <FaGithub size={32} color="#1a1a1a" />
              <FadedLabel $track={1}>gocodeup/codeup_c</FadedLabel>
            </Bookmark>
            <Bookmark $gap={32}>
              <svg width="31" height="32" viewBox="0 0 31 32">
                <rect width="31" height="32" fill="#fbeedd" />
                <path d="M15.5 2V30M4 8L27 24M27 8L4 24" stroke="#e8881c" strokeWidth="5" />
              </svg>
              <BookmarkLabel $track={1.2}>CSS-Tricks</BookmarkLabel>
            </Bookmark>
            <Bookmark $gap={32}>
              <svg width="32" height="32" viewBox="0 0 32 32">
                <rect width="32" height="32" rx="3" fill="#000" />
                <path d="M5 6C10 3 14 9 20 7C23 6 25 6 27 6V24C21 26 15 21 5 25Z" fill="#fff" />
                <rect x="3" y="4" width="3" height="25" fill="#fff" />
              </svg>
              <BookmarkLabel>Font Awesome</BookmarkLabel>
            </Bookmark>
            <Bookmark $gap={34} $inner={18}>
              <svg width="24" height="31" viewBox="0 0 24 31" fill="none" stroke="#111" strokeWidth="2">
                <path d="M1 1H16L23 8V30H1Z" fill="#fff" />
                <path d="M5 11H19M5 16H19M5 21H19M5 26H15" />
              </svg>
              <BookmarkLabel>JSON Resume</BookmarkLabel>
            </Bookmark>
            <Bookmark $gap={32} $inner={10}>
              <svg width="35" height="34" viewBox="0 0 35 34">
                <circle cx="17.5" cy="17" r="17" fill="#e8501c" />
                <path d="M7 5L14 12H21L28 5L27 20L17.5 28L8 20Z" fill="#f8d8b8" />
                <circle cx="13" cy="17" r="2.4" fill="#222" /><circle cx="22" cy="17" r="2.4" fill="#222" />
              </svg>
              <BookmarkLabel>Blade Syntax</BookmarkLabel>
            </Bookmark>
            <Bookmark $gap={27} $inner={13}>
              <svg width="32" height="30" viewBox="0 0 32 30">
                <path d="M2 6L24 1L30 22L8 29Z" fill="#fff" stroke="#d8a8a8" />
                <path d="M6 12L24 7M8 18L26 13" stroke="#e06058" />
              </svg>
              <BookmarkLabel>Laravel Cheat Sheet</BookmarkLabel>
            </Bookmark>
          </BookmarkBar>
        </Toolbar>

        <Page>
          <Pattern />
          <Content>
            <Title>Address Book</Title>
            <Table>
              <colgroup>
                <col style={{ width: 627 }} />
                <col />
              </colgroup>
              <thead>
                <tr>
                  <HeadCell>Person</HeadCell>
                  <HeadCell>Address</HeadCell>
                </tr>
              </thead>
              <tbody>
                <tr>
                  <BodyCell>
                    <PersonName>Sonia French</PersonName>
                    <ButtonRow>
                      <Button type="button" $w={66} $color="#2c3e50">Edit</Button>
                      <Button type="button" $w={90} $color="#e74c3c">Delete</Button>
                      <Button type="button" $w={144} $color="#1abc9c">New Address</Button>
                    </ButtonRow>
                  </BodyCell>
                  <BodyCell>
                    <ButtonRow $end>
                      <Button type="button" $w={66} $color="#2c3e50">Edit</Button>
                      <Button type="button" $w={90} $color="#e74c3c">Delete</Button>
                    </ButtonRow>
                  </BodyCell>
                </tr>
              </tbody>
            </Table>
            <Form>
              <FormTitle>Add a person</FormTitle>
              <Input placeholder="first name" />
              <Input placeholder="last name" />
              <AddButton type="button">Add</AddButton>
            </Form>
            <Pagination>
              <PageLink $w={59}>«</PageLink>
              <PageLink $w={59}>1</PageLink>
              <PageLink $w={62} $active>2</PageLink>
            </Pagination>
          </Content>
        </Page>
      </Window>

      <Dock>
        <DockBackdrop viewBox="0 0 2880 142">
          <defs>
            <filter id="waves" x="0" y="0" width="100%" height="100%">
              <feTurbulence type="fractalNoise" baseFrequency="0.006 0.07" numOctaves="3" seed="4" />
              <feColorMatrix values="0 0 0 0 0.5  0 0 0 0 0.65  0 0 0 0 0.8  0.9 0 0 0 -0.3" />
            </filter>
            <filter id="soft"><feGaussianBlur stdDeviation="7" /></filter>
            <linearGradient id="shelf" x1="0" y1="0" x2="0" y2="1">
              <stop offset="0" stopColor="#8a96a0" />
              <stop offset="0.5" stopColor="#b2b9bf" />
              <stop offset="1" stopColor="#d4d7da" />
            </linearGradient>
            <clipPath id="shelfClip">
              <path d="M85 74H2795Q2805 74 2809 84L2840 134H40L70 84Q73 74 85 74Z" />
            </clipPath>
          </defs>
          <rect width="2880" height="142" filter="url(#waves)" opacity="0.45" />
          <path d="M85 74H2795Q2805 74 2809 84L2840 134H40L70 84Q73 74 85 74Z" fill="url(#shelf)" />
          <g clipPath="url(#shelfClip)">
            {reflections.map(([cx, color]) => (
              <ellipse key={cx} cx={cx} cy="128" rx="30" ry="13" fill={color} opacity="0.4" filter="url(#soft)" />
            ))}
          </g>
          <path d="M2431 81L2448 125" stroke="#777" strokeWidth="1.5" />
          <rect x="40" y="134" width="2800" height="3" fill="#f4f6f8" />
          <rect x="40" y="137" width="2800" height="5" fill="#86898c" />
          {dockLights.map(x => (
            <g key={x}>
              <rect x={x - 4} y="132" width="30" height="10" fill="#bfe0ff" opacity="0.45" filter="url(#soft)" />
              <rect x={x} y="135" width="22" height="6" fill="#f4fbff" />
            </g>
          ))}
        </DockBackdrop>
        <DesktopLabel $top={13} $left={2717}>Adobe Flash</DesktopLabel>
        <DesktopLabel $top={48} $left={2700} $track={0.4}>Player Installer</DesktopLabel>
        <DockRow>
          {dockIcons.map((icon, i) => {
            const prevEnd = i === 0 ? 0 : dockIcons[i - 1].x + dockIcons[i - 1].w;
            const { C } = icon;
            return (
              <DockItem key={icon.x} $gap={icon.x - prevEnd} $top={icon.y - 1670} $w={icon.w} $h={icon.h}>
                <C />
              </DockItem>
            );
          })}
        </DockRow>
      </Dock>
    </Desktop>
  );
}
